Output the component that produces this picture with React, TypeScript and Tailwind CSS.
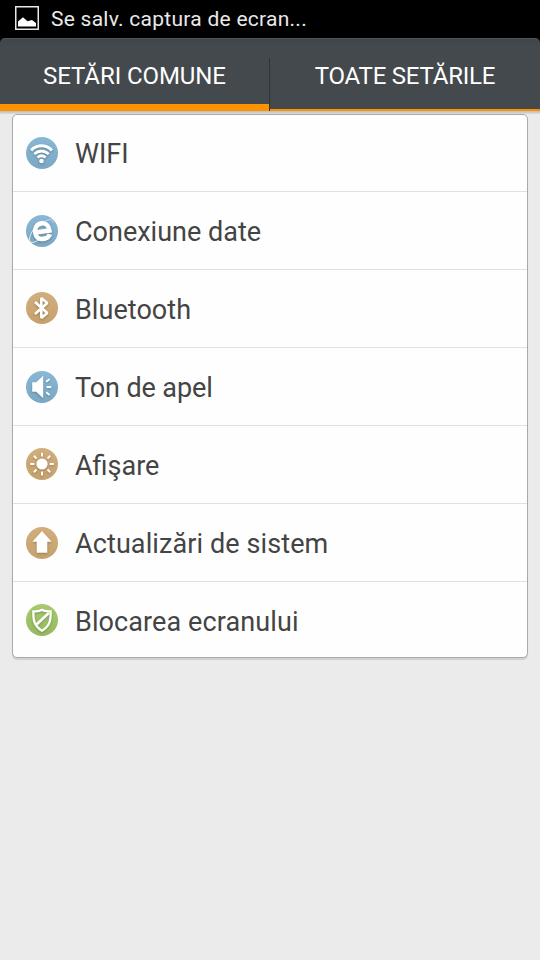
import React from 'react';

type Tone = 'blue' | 'tan' | 'green';

interface Setting {
  label: string;
  tone: Tone;
  icon: React.ReactNode;
  className: string;
  iconClass?: string;
}

const toneClasses: Record<Tone, string> = {
  blue: 'bg-linear-to-b from-[#89b8d5] to-[#79a7c4]',
  tan: 'bg-linear-to-b from-[#d1ae7b] to-[#c5a26d]',
  green: 'bg-linear-to-b from-[#a7cc6f] to-[#96b85f]',
};

const settings: Setting[] = [
  {
    label: 'WIFI',
    tone: 'blue',
    className: 'pt-0.5',
    icon: (
      <g fill="none" stroke="#fff" strokeWidth="2.7">
        <path d="M5.1 13.4C11 7.3 20 7.3 25.9 13.4" strokeWidth="3" />
        <path d="M8.3 17.1C12.5 13 18.5 13 22.7 17.1" />
        <path d="M11.5 20.6Q15.5 16.9 19.5 20.6" />
        <circle cx="15.5" cy="24" r="2.3" fill="#fff" stroke="none" />
      </g>
    ),
  },
  {
    label: 'Conexiune date',
    tone: 'blue',
    className: 'pt-1',
    icon: (
      <g fill="none" stroke="#fff">
        <path
          d="M9.5 16.6H23.4C23.4 11.6 20.8 8.4 16.6 8.4C12 8.4 9 12 9 16.8C9 21.5 12 24 16.3 24C19.6 24 22 22.8 23.4 20.3"
          strokeWidth="4.6"
          transform="rotate(-8 16 16)"
        />
        <path d="M19 6.3C23.5 3.8 27.3 4.1 27.1 8.1" strokeWidth="0.7" opacity="0.8" />
        <path d="M18 6C11 8.5 5.6 15.6 3.8 22C2.4 28 6.7 28.8 12 25.4" strokeWidth="1" opacity="0.85" />
      </g>
    ),
  },
  {
    label: 'Bluetooth',
    tone: 'tan',
    className: 'pt-1 tracking-[0.05px]',
    iconClass: '-mt-0.5',
    icon: <path d="M9 10L21.3 21L15.3 26V6L21.3 11L9 22" fill="none" stroke="#fff" strokeWidth="2.6" strokeLinejoin="bevel" />,
  },
  {
    label: 'Ton de apel',
    tone: 'blue',
    className: 'pt-1 tracking-[-0.1px]',
    icon: (
      <>
        <path d="M6.2 11.3H10.2L17.2 4.8V27.2L10.2 20.7H6.2Z" fill="#fff" />
        <path d="M20.2 10.8L23.6 8M20.6 16H25.3M20.2 21.2L23.6 24" stroke="#fff" strokeWidth="1.8" />
      </>
    ),
  },
  {
    label: 'Afişare',
    tone: 'tan',
    className: 'pt-1',
    iconClass: '-mt-0.5',
    icon: (
      <>
        <circle cx="16" cy="16" r="5.6" fill="#fff" />
        <path
          d="M16 4.7V8.5M16 23.5V27.5M4.2 16H8.3M23.7 16H27.8M7.8 7.8L10.5 10.5M21.5 21.5L24.2 24.2M7.8 24.2L10.5 21.5M21.5 10.5L24.2 7.8"
          stroke="#fff"
          strokeWidth="2"
        />
      </>
    ),
  },
  {
    label: 'Actualizări de sistem',
    tone: 'tan',
    className: 'pt-1 tracking-[0.1px]',
    icon: <path d="M16 4L25.7 14.7H21.3V25.8H10.7V14.7H6.3Z" fill="#fff" />,
  },
  {
    label: 'Blocarea ecranului',
    tone: 'green',
    className: 'pt-1 tracking-[0.1px]',
    icon: (
      <g fill="none" stroke="#fff">
        <path d="M16 5.8C13.4 7.7 10.6 7.3 7.4 7.3C7.2 14.2 7.1 21.4 16 26.7C24.9 21.4 24.8 14.2 24.6 7.3C21.4 7.3 18.6 7.7 16 5.8Z" strokeWidth="2.3" />
        <path d="M10.5 20.5L22.8 9" strokeWidth="2.6" />
      </g>
    ),
  },
];

const StatusBar = () => (
  <div className="flex h-[38px] items-center bg-black pl-[15px] text-[#e9e9e9]">
    <svg width="24" height="24" viewBox="0 0 24 24" className="-mt-0.5">
      <rect x="0.75" y="0.75" width="22.5" height="22.5" fill="none" stroke="#e9e9e9" strokeWidth="1.5" />
      <path d="M3 20.5V15.5L8 11.3L12.5 15.3L17 14L21 17V20.5Z" fill="#fff" />
    </svg>
    <span className="ml-3 text-[21px] leading-6 tracking-[0.26px] whitespace-nowrap">Se salv. captura de ecran...</span>
  </div>
);

const Tabs = () => (
  <div className="bg-black">
    <div className="flex h-[73px] overflow-hidden rounded-t-[5px] border-t border-[#50565a] bg-linear-to-b from-[#3f4549] to-[#44494d] to-10% text-2xl text-white">
      <div className="flex w-[269px] items-center justify-center border-b-[7px] border-[#ff9200] pt-2">
        <span className="tracking-[-0.08px] whitespace-nowrap">SETĂRI COMUNE</span>
      </div>
      <div className="mt-[19px] w-px bg-[#303539]" />
      <div className="flex flex-1 items-center justify-center border-b-2 border-[#ff9200] pt-[3px]">
        <span className="tracking-[-0.2px] whitespace-nowrap">TOATE SETĂRILE</span>
      </div>
    </div>
  </div>
);

const App: React.FC = () => {
  return (
    <div className="h-[960px] w-[540px] overflow-hidden bg-[#ebebeb] font-['Roboto',sans-serif]">
      <StatusBar />
      <Tabs />
      <div className="h-[3px] bg-linear-to-b from-[#bcbcbc] to-[#dedede]" />
      <ul className="mx-3 h-[544px] rounded-[5px] border border-[#aaa] bg-[#fefefe] shadow-[0_2px_1px_#d0d0d0]">
        {settings.map(({ label, tone, icon, className, iconClass }) => (
          <li key={label} className="flex h-[78px] items-center border-b border-[#e1e1e1] pl-[13px] first:h-[77px] last:h-[76px] last:border-b-0">
            <span className={`size-8 shrink-0 overflow-hidden rounded-full ${toneClasses[tone]} ${iconClass ?? ''}`}>
              <svg viewBox="0 0 32 32" className="size-8 drop-shadow-[0_1px_1px_rgba(0,0,0,0.25)]">
                {icon}
              </svg>
            </span>
            <span className={`ml-[17px] text-[27px] whitespace-nowrap text-[#444] ${className}`}>{label}</span>
          </li>
        ))}
      </ul>
    </div>
  );
};

export default App;
